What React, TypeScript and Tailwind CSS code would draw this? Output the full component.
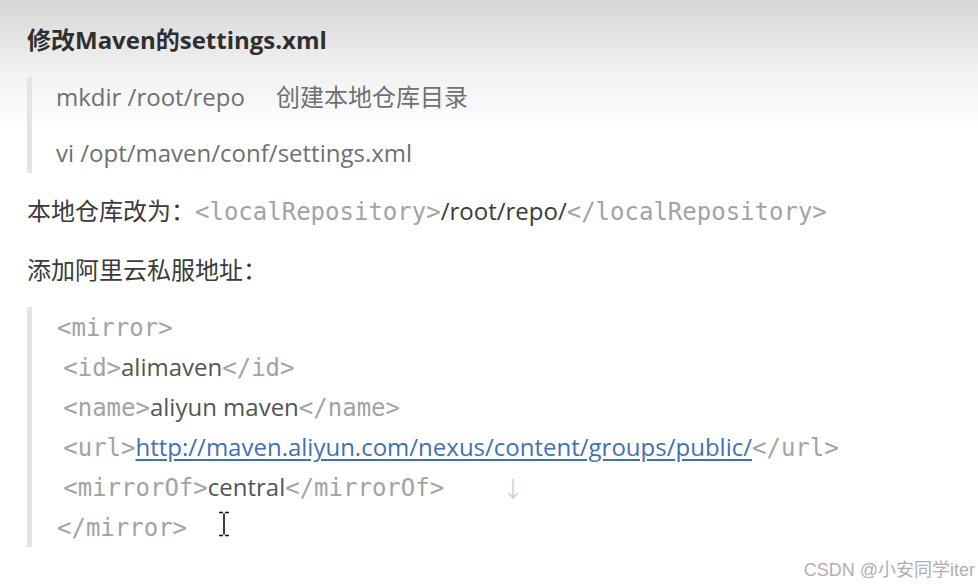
const sans = "font-['Open_Sans','Noto_Sans_CJK_SC',sans-serif]";
const mono = "font-['DejaVu_Sans_Mono','Noto_Sans_CJK_SC',monospace]";

function Tag({ children }: { children: React.ReactNode }) {
  return <span className={`${mono} text-[#a3a3a3]`}>{children}</span>;
}

function Line({ children }: { children: React.ReactNode }) {
  return <p className="h-[40px] leading-[40px]">{children}</p>;
}

export default function App() {
  return (
    <div
      className={`relative w-[978px] h-[588px] overflow-hidden bg-[linear-gradient(to_bottom,#d6d6d6_0px,#f1f1f1_70px,#ffffff_130px)] pl-[27px] pt-[22px] text-[24px] ${sans}`}
    >
      <h1 className="font-bold leading-[36px] text-[#2f2f2f]">修改Maven的settings.xml</h1>

      {/* shell commands */}
      <blockquote className="mt-[19px] border-l-[5px] border-[#e4e4e4] pl-[24px] text-[#707070]">
        <p className="leading-[40px] whitespace-pre">mkdir /root/repo     创建本地仓库目录</p>
        <p className="mt-[16px] leading-[40px]">vi /opt/maven/conf/settings.xml</p>
      </blockquote>

      <p className="mt-[18px] h-[40px] leading-[40px] text-[#3a3a3a]">
        本地仓库改为：<Tag>&lt;localRepository&gt;</Tag>/root/repo/<Tag>&lt;/localRepository&gt;</Tag>
      </p>
      <p className="mt-[19px] leading-[40px] text-[#3a3a3a]">添加阿里云私服地址：</p>

      {/* mirror config */}
      <blockquote className="mt-[17px] border-l-[5px] border-[#e4e4e4] pl-[25px] text-[#555] whitespace-pre">
        <Line>
          <Tag>&lt;mirror&gt;</Tag>
        </Line>
        <Line>
          {' '}<Tag>&lt;id&gt;</Tag>alimaven<Tag>&lt;/id&gt;</Tag>
        </Line>
        <Line>
          {' '}<Tag>&lt;name&gt;</Tag>aliyun maven<Tag>&lt;/name&gt;</Tag>
        </Line>
        <Line>
          {' '}<Tag>&lt;url&gt;</Tag>
          <a className="text-[#3f72b0] underline underline-offset-[3px]" href="#">
            http://maven.aliyun.com/nexus/content/groups/public/
          </a>
          <Tag>&lt;/url&gt;</Tag>
        </Line>
        <Line>
          {' '}<Tag>&lt;mirrorOf&gt;</Tag>central<Tag>&lt;/mirrorOf&gt;</Tag>
        </Line>
        <Line>
          <Tag>&lt;/mirror&gt;</Tag>
        </Line>
      </blockquote>

      {/* overlays from the recording */}
      <span className="absolute left-[502px] top-[474px] text-[22px] leading-[28px] text-[#cfcfcf]">↓</span>
      <svg className="absolute left-[216px] top-[511px]" width="16" height="26" viewBox="0 0 16 26">
        <path d="M3 1.5h4M9 1.5h4M8 2.5v21M3 24.5h4M9 24.5h4" stroke="#111" strokeWidth="1.6" fill="none" />
      </svg>

      <div className="absolute right-[3px] bottom-[6px] font-['Liberation_Sans','Noto_Sans_CJK_SC',sans-serif] text-[18px] leading-[24px] text-[#b0b0b0] [text-shadow:0_0_2px_#fff]">
        CSDN @小安同学iter
      </div>
    </div>
  );
}
